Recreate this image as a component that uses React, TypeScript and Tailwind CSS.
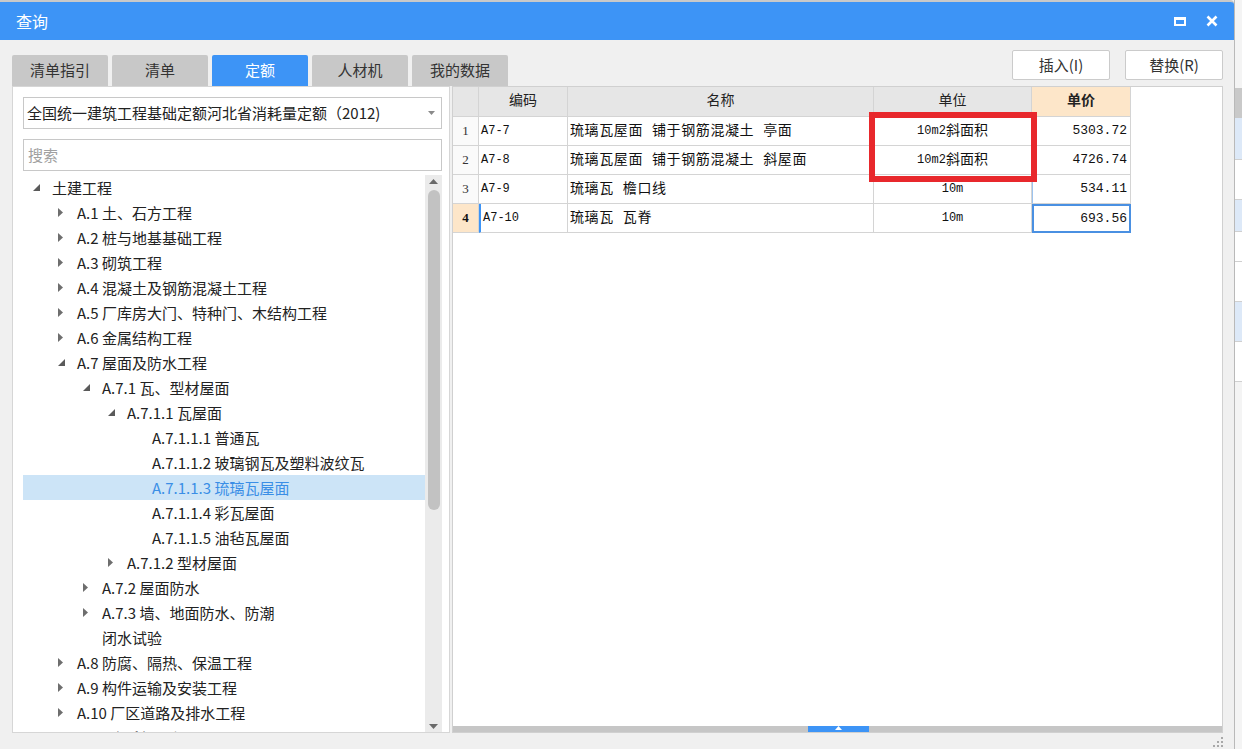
import React from 'react';

type Arrow = 'open' | 'closed' | null;

interface TreeRow {
  level: number;
  arrow: Arrow;
  text: string;
  selected?: boolean;
}

const TREE: TreeRow[] = [
  { level: 0, arrow: 'open', text: '土建工程' },
  { level: 1, arrow: 'closed', text: 'A.1 土、石方工程' },
  { level: 1, arrow: 'closed', text: 'A.2 桩与地基基础工程' },
  { level: 1, arrow: 'closed', text: 'A.3 砌筑工程' },
  { level: 1, arrow: 'closed', text: 'A.4 混凝土及钢筋混凝土工程' },
  { level: 1, arrow: 'closed', text: 'A.5 厂库房大门、特种门、木结构工程' },
  { level: 1, arrow: 'closed', text: 'A.6 金属结构工程' },
  { level: 1, arrow: 'open', text: 'A.7 屋面及防水工程' },
  { level: 2, arrow: 'open', text: 'A.7.1 瓦、型材屋面' },
  { level: 3, arrow: 'open', text: 'A.7.1.1 瓦屋面' },
  { level: 4, arrow: null, text: 'A.7.1.1.1 普通瓦' },
  { level: 4, arrow: null, text: 'A.7.1.1.2 玻璃钢瓦及塑料波纹瓦' },
  { level: 4, arrow: null, text: 'A.7.1.1.3 琉璃瓦屋面', selected: true },
  { level: 4, arrow: null, text: 'A.7.1.1.4 彩瓦屋面' },
  { level: 4, arrow: null, text: 'A.7.1.1.5 油毡瓦屋面' },
  { level: 3, arrow: 'closed', text: 'A.7.1.2 型材屋面' },
  { level: 2, arrow: 'closed', text: 'A.7.2 屋面防水' },
  { level: 2, arrow: 'closed', text: 'A.7.3 墙、地面防水、防潮' },
  { level: 2, arrow: null, text: '闭水试验' },
  { level: 1, arrow: 'closed', text: 'A.8 防腐、隔热、保温工程' },
  { level: 1, arrow: 'closed', text: 'A.9 构件运输及安装工程' },
  { level: 1, arrow: 'closed', text: 'A.10 厂区道路及排水工程' },
  { level: 1, arrow: 'closed', text: 'A.11 脚手架工程' },
];

const INDENT = ['pl-[8px]', 'pl-[33px]', 'pl-[58px]', 'pl-[83px]', 'pl-[108px]'];

const TABS = ['清单指引', '清单', '定额', '人材机', '我的数据'];

const ROWS = [
  { no: '1', code: 'A7-7', name: '琉璃瓦屋面 铺于钢筋混凝土 亭面', unitNum: '10m2', unitCn: '斜面积', price: '5303.72' },
  { no: '2', code: 'A7-8', name: '琉璃瓦屋面 铺于钢筋混凝土 斜屋面', unitNum: '10m2', unitCn: '斜面积', price: '4726.74' },
  { no: '3', code: 'A7-9', name: '琉璃瓦 檐口线', unitNum: '10m', unitCn: '', price: '534.11' },
  { no: '4', code: 'A7-10', name: '琉璃瓦 瓦脊', unitNum: '10m', unitCn: '', price: '693.56' },
];

const SANS = "font-['Noto_Sans_CJK_SC','Microsoft_YaHei',sans-serif]";
const GRID = "font-['Liberation_Mono','Noto_Sans_CJK_SC',monospace]";

function TreeArrow({ kind }: { kind: Arrow }) {
  if (kind === 'open') {
    return (
      <svg width="7" height="7" viewBox="0 0 7 7">
        <path d="M7 0 L7 7 L0 7 Z" fill="#5a5a5a" />
      </svg>
    );
  }
  if (kind === 'closed') {
    return (
      <svg width="5" height="9" viewBox="0 0 5 9">
        <path d="M0 0 L5 4.5 L0 9 Z" fill="#6e6e6e" />
      </svg>
    );
  }
  return null;
}

function TreePanel() {
  return (
    <div className="flex-1 min-h-0 flex overflow-hidden">
      <div className="w-[402px] overflow-hidden">
        {TREE.map((row, i) => (
          <div
            key={i}
            className={`h-[25px] flex items-center ${INDENT[row.level]} ${row.selected ? 'bg-[#cce4f7]' : ''}`}
          >
            <span className="w-[21px] flex items-center pl-[2px] shrink-0">
              <TreeArrow kind={row.arrow} />
            </span>
            <span
              className={`text-[15px] whitespace-nowrap leading-none ${row.selected ? 'text-[#3a8ee6]' : 'text-[#222]'}`}
            >
              {row.text}
            </span>
          </div>
        ))}
      </div>
      {/* vertical scrollbar */}
      <div className="w-[17px] bg-[#ebebeb] flex flex-col items-center">
        <svg className="mt-[4px]" width="9" height="5" viewBox="0 0 9 5">
          <path d="M0 5 L4.5 0 L9 5 Z" fill="#6a6a6a" />
        </svg>
        <div className="mt-[6px] w-[12px] h-[320px] rounded-full bg-[#c2c2c2]" />
        <div className="flex-1" />
        <svg className="mb-[3px]" width="9" height="5" viewBox="0 0 9 5">
          <path d="M0 0 L9 0 L4.5 5 Z" fill="#6a6a6a" />
        </svg>
      </div>
    </div>
  );
}

function LeftPanel() {
  return (
    <div className="w-[438px] bg-white border border-[#d6d6d6] flex flex-col pl-[10px] pr-[6px] pt-[10px]">
      <div className="h-[32px] w-[419px] border border-[#c8c8c8] flex items-center pl-[3px] pr-[6px]">
        <span className="flex-1 text-[15px] text-[#222] whitespace-nowrap">
          全国统一建筑工程基础定额河北省消耗量定额（2012)
        </span>
        <svg width="7" height="4" viewBox="0 0 7 4">
          <path d="M0 0 L7 0 L3.5 4 Z" fill="#8a8a8a" />
        </svg>
      </div>
      <div className="mt-[10px] h-[32px] w-[419px] border border-[#c8c8c8] flex items-center pl-[4px]">
        <span className="text-[15px] text-[#a0a0a0]">搜索</span>
      </div>
      <div className="mt-[4px] flex-1 min-h-0 flex flex-col">
        <TreePanel />
      </div>
    </div>
  );
}

function Grid() {
  const cell = 'border-r border-b border-[#d4d4d4]';
  const head = `bg-[#e6e6e6] ${cell} flex items-center justify-center text-[14px] text-[#222]`;
  return (
    <div className="w-[771px] bg-white border border-[#d0d0d0] flex flex-col relative">
      <div className={`flex-1 ${GRID}`}>
        {/* header */}
        <div className="flex h-[30px]">
          <div className={`w-[26px] bg-[#e6e6e6] ${cell}`} />
          <div className={`w-[89px] ${head}`}>编码</div>
          <div className={`w-[306px] ${head}`}>名称</div>
          <div className={`w-[158px] ${head}`}>单位</div>
          <div className={`w-[99px] bg-[#fde6c9] ${cell} flex items-center justify-center text-[14px] font-bold text-[#222]`}>
            单价
          </div>
        </div>
        {ROWS.map((r) => {
          const current = r.no === '4';
          return (
            <div key={r.no} className="flex h-[29px]">
              <div
                className={`w-[26px] ${cell} flex items-center justify-center text-[13px] font-['Liberation_Serif',serif] ${
                  current ? 'bg-[#fde6c9] font-bold text-[#111]' : 'bg-[#fafafa] text-[#333]'
                }`}
              >
                {r.no}
              </div>
              <div
                className={`w-[89px] ${cell} flex items-center pl-[2px] text-[12px] text-[#111] ${
                  current ? 'border-l-2 border-l-[#3d94f6]' : ''
                }`}
              >
                {r.code}
              </div>
              <div
                className={`w-[306px] ${cell} flex items-center pl-[2px] text-[14px] tracking-[0.6px] text-[#111] whitespace-nowrap`}
              >
                {r.name}
              </div>
              <div className={`w-[158px] ${cell} flex items-center justify-center text-[14px] text-[#111]`}>
                <span className="text-[12px]">{r.unitNum}</span>
                <span>{r.unitCn}</span>
              </div>
              {current ? (
                <div className="w-[99px] border-2 border-[#4a90e2] flex items-center justify-end pr-[2px] text-[13px] text-[#111]">
                  {r.price}
                </div>
              ) : (
                <div className="w-[99px] border-b border-r border-[#d4d4d4] border-l border-l-[#9cc3ee] flex items-center justify-end pr-[3px] text-[13px] text-[#111]">
                  {r.price}
                </div>
              )}
            </div>
          );
        })}
      </div>
      {/* horizontal scrollbar */}
      <div className="h-[6px] bg-[#c6c6c6] flex">
        <div className="w-[355px]" />
        <div className="w-[61px] bg-[#3d94f6] flex items-start justify-center">
          <svg width="7" height="4" viewBox="0 0 7 4">
            <path d="M0 4 L3.5 0 L7 4 Z" fill="#ffffff" />
          </svg>
        </div>
      </div>
      {/* annotation box over the 单位 cells */}
      <div className="absolute left-[416px] top-[25px] w-[168px] h-[70px] border-[6px] border-[#e8282c] pointer-events-none" />
    </div>
  );
}

function TitleBar() {
  return (
    <div className="h-[40px] bg-[#3d94f6] border-t-2 border-[#c9c9c9] rounded-tr-[4px] flex items-center pl-[16px] pr-[16px]">
      <span className={`text-[16px] text-white ${SANS}`}>查询</span>
      <div className="flex-1" />
      <div className="w-[12px] h-[9px] border-2 border-t-[3px] border-white mr-[20px]" />
      <svg width="12" height="12" viewBox="0 0 12 12">
        <path d="M1.5 1.5 L10.5 10.5 M10.5 1.5 L1.5 10.5" stroke="#ffffff" strokeWidth="2.6" />
      </svg>
    </div>
  );
}

export default function App() {
  return (
    <div className={`w-[1242px] h-[749px] flex bg-[#f0f0f0] overflow-hidden ${SANS}`}>
      <div className="w-[1235px] flex flex-col border-r border-[#b9b9b9]">
        <TitleBar />
        <div className="flex-1 bg-[#f0f0f0] flex flex-col pl-[12px] pr-[11px] pt-[10px]">
          {/* tabs + buttons */}
          <div className="h-[36px] flex">
            <div className="flex gap-[4px] items-end">
              {TABS.map((t) => (
                <div
                  key={t}
                  className={`w-[96px] h-[31px] rounded-t-[2px] flex items-center justify-center text-[15px] ${
                    t === '定额' ? 'bg-[#3d94f6] text-white' : 'bg-[#c8c8c8] text-[#333]'
                  }`}
                >
                  {t}
                </div>
              ))}
            </div>
            <div className="flex-1" />
            <div className="flex gap-[15px] items-start">
              <button className="w-[98px] h-[30px] bg-white border border-[#cbcbcb] rounded-[2px] text-[15px] text-[#333]">
                插入(I)
              </button>
              <button className="w-[98px] h-[30px] bg-white border border-[#cbcbcb] rounded-[2px] text-[15px] text-[#333]">
                替换(R)
              </button>
            </div>
          </div>
          {/* panels */}
          <div className="h-[647px] flex gap-[2px]">
            <LeftPanel />
            <Grid />
          </div>
          <div className="flex-1 flex justify-end items-end pb-[2px]">
            <svg width="10" height="10" viewBox="0 0 10 10">
              <g fill="#a8a8a8">
                <rect x="8" y="0" width="2" height="2" />
                <rect x="4" y="4" width="2" height="2" />
                <rect x="8" y="4" width="2" height="2" />
                <rect x="0" y="8" width="2" height="2" />
                <rect x="4" y="8" width="2" height="2" />
                <rect x="8" y="8" width="2" height="2" />
              </g>
            </svg>
          </div>
        </div>
      </div>
      {/* sliver of the window behind */}
      <div className="flex-1 flex flex-col">
        <div className="h-[88px] bg-[#f4f4f4]" />
        <div className="h-[30px] bg-[#c9c9c9]" />
        <div className="h-[42px] bg-[#dde9f8] border-b border-[#d0d0d0]" />
        <div className="h-[40px] bg-white border-b border-[#d0d0d0]" />
        <div className="h-[32px] bg-[#dde9f8] border-b border-[#d0d0d0]" />
        <div className="h-[30px] bg-white border-b border-[#d0d0d0]" />
        <div className="h-[40px] bg-white border-b border-[#d0d0d0]" />
        <div className="h-[40px] bg-[#dde9f8] border-b border-[#d0d0d0]" />
        <div className="h-[40px] bg-white border-b border-[#d0d0d0]" />
        <div className="flex-1 bg-[#f4f4f4]" />
      </div>
    </div>
  );
}
